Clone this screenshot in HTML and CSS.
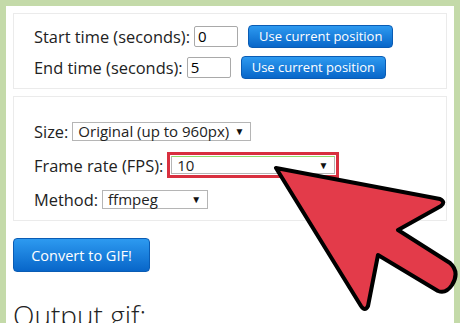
FILE: index.html
```html
<!DOCTYPE html>
<html lang="en">
<head>
  <meta charset="UTF-8" />
  <title>Video to GIF</title>
  <link rel="stylesheet" href="styles.css">
</head>
<body>
  <div class="panel">
    <!-- time range -->
    <div class="box box-time">
      <div class="row">
        <label>Start time (seconds):</label>
        <input type="text" class="num" value="0">
        <button class="btn">Use current position</button>
      </div>
      <div class="row">
        <label>End time (seconds):</label>
        <input type="text" class="num" value="5">
        <button class="btn">Use current position</button>
      </div>
    </div>

    <!-- options -->
    <div class="box box-opts">
      <div class="row">
        <label>Size:</label>
        <div class="select select-size"><span>Original (up to 960px)</span><i>▼</i></div>
      </div>
      <div class="row">
        <label>Frame rate (FPS):</label>
        <div class="highlight">
          <div class="select select-fps"><span>10</span><i>▼</i></div>
        </div>
      </div>
      <div class="row">
        <label>Method:</label>
        <div class="select select-method"><span>ffmpeg</span><i>▼</i></div>
      </div>
    </div>

    <button class="btn btn-big">Convert to GIF!</button>

    <h2 class="output">Output gif:</h2>
  </div>

  <!-- pointer overlay -->
  <svg class="arrow" width="460" height="323" viewBox="0 0 460 323">
    <path d="M276 168 L440 199 Q446 202 441 206 L398 230 L450 263 Q460 272 452 285 Q446 294 438 291 L378 255 L368 306 Q365 312 361 306 Z"
          fill="#e33b4a" stroke="#000" stroke-width="4" stroke-linejoin="round"/>
  </svg>
</body>
</html>
```

FILE: styles.css
```css
body {
  margin: 0;
  background: #c4daa9;
  font-family: 'Open Sans', sans-serif;
  color: #222;
  overflow: hidden;
  height: 323px;
}

.panel {
  margin: 6px 6px 0 6px;
  background: #fff;
  padding: 7px 7px 0 7px;
  height: 330px;
}

.box {
  border: 1px solid #ebebeb;
  padding: 10px 20px;
}

.box-time {
  padding-top: 10px;
  padding-bottom: 9px;
}

.box-opts {
  margin-top: 7px;
  padding-top: 21px;
  padding-bottom: 8px;
}

.row {
  display: flex;
  align-items: center;
  height: 24px;
  margin-bottom: 7px;
  font-size: 16.4px;
}

.box-opts .row {
  height: 26px;
  margin-bottom: 8px;
}

.box .row:last-child {
  margin-bottom: 0;
}

.row label {
  margin-right: 4px;
  white-space: nowrap;
}

.num {
  width: 36px;
  height: 17px;
  border: 1px solid #a9a9a9;
  border-radius: 2px;
  padding: 1px 3px;
  font-family: 'Open Sans', sans-serif;
  font-size: 15px;
  margin-right: 10px;
}

.btn {
  background: linear-gradient(#2d9af0, #0866c9);
  color: #fff;
  border: 1px solid #0a5cb4;
  border-radius: 4px;
  font-family: 'Open Sans', sans-serif;
  font-size: 13px;
  height: 23px;
  padding: 0 10px;
  white-space: nowrap;
}

.btn-big {
  display: block;
  margin-top: 17px;
  width: 137px;
  height: 34px;
  font-size: 14.5px;
}

.select {
  display: flex;
  align-items: center;
  justify-content: space-between;
  height: 17px;
  border: 1px solid #b5b5b5;
  padding: 0 6px 0 5px;
  font-size: 15px;
  background: #fff;
}

.select i {
  font-style: normal;
  font-size: 10px;
  color: #111;
}

.select-size {
  width: 166px;
}

.select-method {
  width: 93px;
}

.highlight {
  border: 3px solid #d8303f;
  padding: 1px;
}

.select-fps {
  width: 151px;
  height: 16px;
  border-top-color: #8fdc6a;
}

.output {
  margin: 24px 0 0 0;
  font-size: 28px;
  font-weight: 300;
  color: #222;
  white-space: nowrap;
}

.arrow {
  position: absolute;
  left: 0;
  top: 0;
}
```
